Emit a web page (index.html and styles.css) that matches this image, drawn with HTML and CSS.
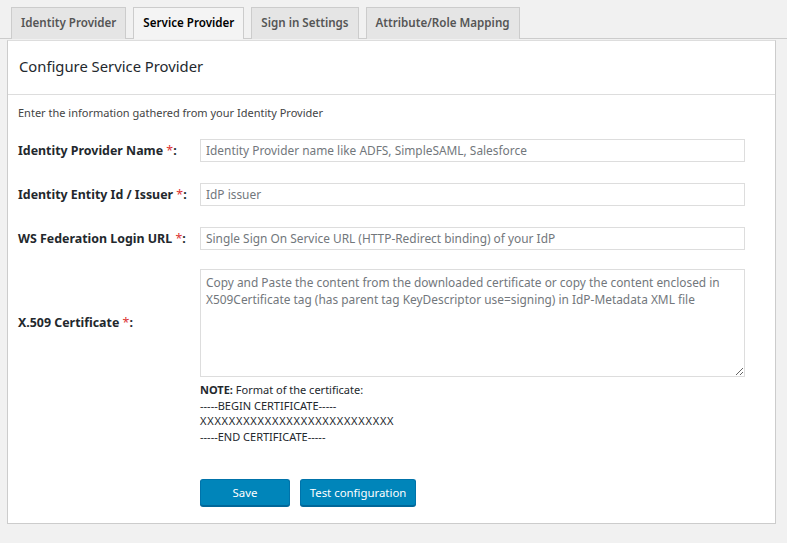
FILE: index.html
```html
<!DOCTYPE html>
<html>
<head>
<meta charset="utf-8">
<link rel="stylesheet" href="styles.css">
</head>
<body>
<div class="tabs">
  <div class="tab">Identity Provider</div>
  <div class="tab active">Service Provider</div>
  <div class="tab">Sign in Settings</div>
  <div class="tab">Attribute/Role Mapping</div>
</div>
<div class="panel">
  <div class="panel-head">Configure Service Provider</div>
  <div class="intro">Enter the information gathered from your Identity Provider</div>
  <div class="form">
    <div class="row">
      <div class="label">Identity Provider Name <span class="req">*</span>:</div>
      <input class="field" type="text" placeholder="Identity Provider name like ADFS, SimpleSAML, Salesforce">
    </div>
    <div class="row">
      <div class="label">Identity Entity Id / Issuer <span class="req">*</span>:</div>
      <input class="field" type="text" placeholder="IdP issuer">
    </div>
    <div class="row">
      <div class="label">WS Federation Login URL <span class="req">*</span>:</div>
      <input class="field" type="text" placeholder="Single Sign On Service URL (HTTP-Redirect binding) of your IdP">
    </div>
    <div class="row cert">
      <div class="label">X.509 Certificate <span class="req">*</span>:</div>
      <textarea class="area" placeholder="Copy and Paste the content from the downloaded certificate or copy the content enclosed in X509Certificate tag (has parent tag KeyDescriptor use=signing) in IdP-Metadata XML file"></textarea>
    </div>
    <div class="note">
      <div><b>NOTE:</b> Format of the certificate:</div>
      <div>-----BEGIN CERTIFICATE-----</div>
      <div class="xline">XXXXXXXXXXXXXXXXXXXXXXXXXXX</div>
      <div>-----END CERTIFICATE-----</div>
    </div>
    <div class="actions">
      <button class="btn save">Save</button>
      <button class="btn test">Test configuration</button>
    </div>
  </div>
</div>
</body>
</html>
```
FILE: styles.css
```css
html, body {
  margin: 0;
  padding: 0;
  background: #f1f1f1;
  font-family: "Noto Sans", "Open Sans", sans-serif;
  color: #23282d;
  width: 787px;
  height: 543px;
  overflow: hidden;
}
.tabs {
  display: flex;
  gap: 7px;
  padding: 7px 0 0 11px;
  border-bottom: 1px solid #ccc;
  height: 31px;
  box-sizing: content-box;
}
.tab {
  box-sizing: border-box;
  height: 32px;
  padding: 0 9px;
  border: 1px solid #ccc;
  border-bottom: none;
  background: #e5e5e5;
  color: #555;
  font-size: 11.6px;
  font-weight: 600;
  line-height: 30px;
  white-space: nowrap;
}
.tab.active {
  background: #f4f4f4;
  color: #000;
}
.panel {
  margin: 1px 11px 0 7px;
  height: 484px;
  box-sizing: border-box;
  background: #fff;
  border: 1px solid #ccc;
  border-top: 1px solid #ddd;
}
.panel-head {
  height: 54px;
  box-sizing: border-box;
  padding: 0 11px;
  font-size: 14.8px;
  line-height: 51px;
  color: #23282d;
  border-bottom: 1px solid #ddd;
}
.intro {
  padding: 10px 10px 0;
  font-size: 11px;
  line-height: 16px;
  color: #444;
}
.form {
  padding: 0 10px;
}
.row {
  display: flex;
  align-items: center;
  margin-top: 18px;
  height: 22px;
}
.row + .row {
  margin-top: 22px;
}
.row.cert {
  margin-top: 20px;
  height: 107px;
}
.label {
  width: 182px;
  flex: none;
  font-size: 12.4px;
  font-weight: 700;
  color: #23282d;
}
.req {
  color: #dc3232;
  font-weight: 400;
}
.field, .area {
  width: 545px;
  box-sizing: border-box;
  border: 1px solid #ddd;
  background: #fff;
  font-family: inherit;
  font-size: 11.9px;
  color: #32373c;
  margin: 0;
  outline: none;
}
.field {
  height: 23px;
  padding: 0 5px;
}
.area {
  height: 108px;
  padding: 4px 5px;
  resize: vertical;
  line-height: 17px;
}
.field::placeholder, .area::placeholder {
  color: #72777c;
}
.note {
  margin-left: 182px;
  margin-top: 6px;
  font-size: 11px;
  line-height: 15.7px;
  color: #23282d;
}
.note b {
  font-weight: 700;
}
.xline {
  letter-spacing: 0.75px;
}
.actions {
  margin-left: 182px;
  margin-top: 34px;
  display: flex;
  gap: 10px;
}
.btn {
  height: 27px;
  box-sizing: border-box;
  background: #0085ba;
  border: 1px solid #0073aa;
  border-bottom-color: #006799;
  border-radius: 3px;
  color: #fff;
  font-family: inherit;
  font-size: 11.4px;
  padding: 0 4px;
  white-space: nowrap;
  box-shadow: 0 1px 0 #006799;
}
.btn.save {
  width: 90px;
}
.btn.test {
  width: 116px;
}
```
